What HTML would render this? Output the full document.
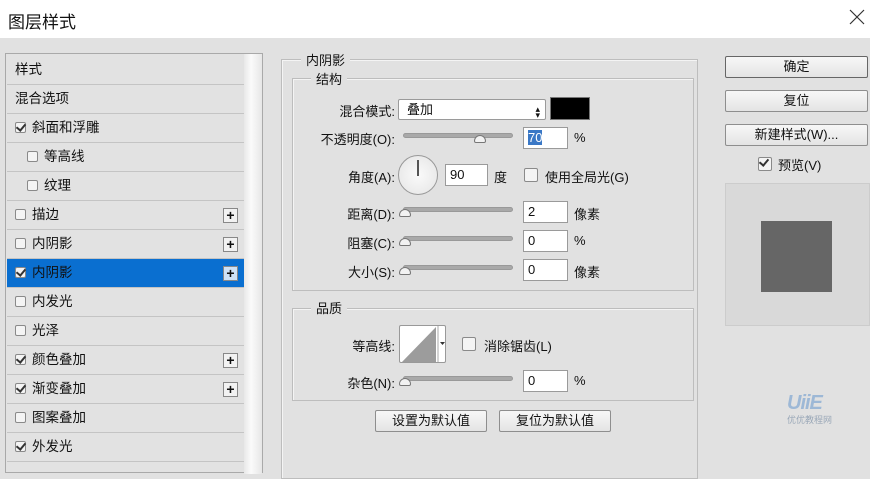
<!DOCTYPE html>
<html><head><meta charset="utf-8"><style>
*{margin:0;padding:0;box-sizing:border-box}
body{width:870px;height:464px;overflow:hidden;background:#e1e1e1;font-family:"Liberation Sans","Noto Sans CJK SC",sans-serif;font-size:13px;color:#111;position:relative}
.a{position:absolute}
.title{left:0;top:0;width:870px;height:38px;background:#fff}
.row{position:absolute;left:7px;width:237px;height:29px;border-bottom:1px solid #c4c4c4;background:#e2e2e2;line-height:28px;padding-left:8px;font-size:13.5px}
.row.sel{background:#0a6fd0;color:#111}
.cb{display:inline-block;width:11px;height:11px;border:1px solid #8a8a8a;background:#f4f4f4;vertical-align:-1px;margin-right:6px;border-radius:2px;position:relative}
.ck::after{content:"";position:absolute;left:2px;top:-1px;width:4px;height:7px;border-right:2px solid #333;border-bottom:2px solid #333;transform:rotate(40deg)}
.plus{position:absolute;right:6px;top:7px;width:15px;height:15px;border:1px solid #888;background:#f2f2f2;font-weight:bold;line-height:13px;text-align:center;font-size:14px}
.lbl{position:absolute;text-align:right;width:120px;font-size:13px}
.track{position:absolute;height:5px;background:#a9a9a9;border-radius:3px;border:1px solid #999}
.thumb{position:absolute;width:12px;height:8px;border:1px solid #777;background:#f2f2f2;border-radius:6px 6px 2px 2px}
.inp{position:absolute;width:45px;height:22px;background:#fff;border:1px solid #9a9a9a;padding-left:4px;line-height:20px}
.btn{position:absolute;height:22px;border:1px solid #8e8e8e;border-radius:2px;background:linear-gradient(#f7f7f7,#e4e4e4);text-align:center;line-height:20px;font-size:13px}
.frame{position:absolute;border:1px solid #bdbdbd;box-shadow:1px 1px 0 #f4f4f4 inset}
.leg{position:absolute;background:#e1e1e1;padding:0 5px;font-size:13px}
.box{position:absolute;width:14px;height:14px;border:1px solid #8a8a8a;background:#f4f4f4;border-radius:2px}
</style></head><body>
<div class="a title"></div>
<div class="a" style="left:8px;top:8px;font-size:17px">图层样式</div>
<svg class="a" style="left:849px;top:9px" width="16" height="16"><path d="M1 1L15 15M15 1L1 15" stroke="#333" stroke-width="1.2"/></svg>

<div class="a" style="left:5px;top:53px;width:258px;height:420px;border:1px solid #a9a9a9;background:#e2e2e2"></div>
<div class="a" style="left:244px;top:54px;width:18px;height:420px;background:linear-gradient(90deg,#e8e8e8,#fbfbfb 40%,#e6e6e6)"></div>
<div class="row" style="top:56px">样式</div>
<div class="row" style="top:85px">混合选项</div>
<div class="row" style="top:114px"><span class="cb ck"></span>斜面和浮雕</div>
<div class="row" style="top:143px;padding-left:20px"><span class="cb"></span>等高线</div>
<div class="row" style="top:172px;padding-left:20px"><span class="cb"></span>纹理</div>
<div class="row" style="top:201px"><span class="cb"></span>描边<span class="plus">+</span></div>
<div class="row" style="top:230px"><span class="cb"></span>内阴影<span class="plus">+</span></div>
<div class="row sel" style="top:259px"><span class="cb ck"></span>内阴影<span class="plus" style="background:#cfe2f6">+</span></div>
<div class="row" style="top:288px"><span class="cb"></span>内发光</div>
<div class="row" style="top:317px"><span class="cb"></span>光泽</div>
<div class="row" style="top:346px"><span class="cb ck"></span>颜色叠加<span class="plus">+</span></div>
<div class="row" style="top:375px"><span class="cb ck"></span>渐变叠加<span class="plus">+</span></div>
<div class="row" style="top:404px"><span class="cb"></span>图案叠加</div>
<div class="row" style="top:433px"><span class="cb ck"></span>外发光</div>

<div class="frame" style="left:281px;top:59px;width:417px;height:420px"></div>
<div class="leg" style="left:301px;top:50px">内阴影</div>
<div class="frame" style="left:292px;top:78px;width:402px;height:213px"></div>
<div class="leg" style="left:311px;top:69px">结构</div>

<div class="lbl" style="left:275px;top:101px">混合模式:</div>
<div class="a" style="left:398px;top:99px;width:148px;height:21px;background:#fff;border:1px solid #9a9a9a;border-radius:2px;padding-left:8px;line-height:19px">叠加<span style="position:absolute;right:5px;top:0;font-size:9px">▴</span><span style="position:absolute;right:5px;top:6px;font-size:9px">▾</span></div>
<div class="a" style="left:550px;top:97px;width:40px;height:23px;background:#000;border:1px solid #777"></div>

<div class="lbl" style="left:275px;top:129px">不透明度(O):</div>
<div class="track" style="left:403px;top:133px;width:110px"></div>
<div class="thumb" style="left:474px;top:135px"></div>
<div class="inp" style="left:523px;top:127px;"><span style="background:#3a78c6;color:#fff">70</span></div>
<div class="a" style="left:574px;top:130px">%</div>

<div class="lbl" style="left:275px;top:167px">角度(A):</div>
<div class="a" style="left:398px;top:155px;width:40px;height:40px;border:1px solid #999;border-radius:50%;background:radial-gradient(#fafafa,#e4e4e4)"></div>
<div class="a" style="left:417px;top:160px;width:2px;height:16px;background:#555"></div>
<div class="inp" style="left:445px;top:164px;width:43px">90</div>
<div class="a" style="left:494px;top:167px">度</div>
<div class="box" style="left:524px;top:168px"></div>
<div class="a" style="left:545px;top:167px">使用全局光(G)</div>

<div class="lbl" style="left:275px;top:204px">距离(D):</div>
<div class="track" style="left:403px;top:207px;width:110px"></div>
<div class="thumb" style="left:399px;top:209px"></div>
<div class="inp" style="left:523px;top:201px">2</div>
<div class="a" style="left:574px;top:204px">像素</div>

<div class="lbl" style="left:275px;top:233px">阻塞(C):</div>
<div class="track" style="left:403px;top:236px;width:110px"></div>
<div class="thumb" style="left:399px;top:238px"></div>
<div class="inp" style="left:523px;top:230px">0</div>
<div class="a" style="left:574px;top:233px">%</div>

<div class="lbl" style="left:275px;top:262px">大小(S):</div>
<div class="track" style="left:403px;top:265px;width:110px"></div>
<div class="thumb" style="left:399px;top:267px"></div>
<div class="inp" style="left:523px;top:259px">0</div>
<div class="a" style="left:574px;top:262px">像素</div>

<div class="frame" style="left:292px;top:308px;width:402px;height:93px"></div>
<div class="leg" style="left:311px;top:298px">品质</div>
<div class="lbl" style="left:275px;top:336px">等高线:</div>
<div class="a" style="left:399px;top:325px;width:47px;height:38px;border:1px solid #999;background:#fff;border-radius:2px;overflow:hidden">
<svg width="47" height="38" style="position:absolute;left:0;top:0"><polygon points="1,37 36,1 36,37" fill="#9c9c9c"/><line x1="38" y1="0" x2="38" y2="38" stroke="#aaa"/><polygon points="40,16 45,16 42.5,19" fill="#333"/></svg></div>
<div class="box" style="left:462px;top:337px"></div>
<div class="a" style="left:484px;top:336px">消除锯齿(L)</div>
<div class="lbl" style="left:275px;top:373px">杂色(N):</div>
<div class="track" style="left:403px;top:376px;width:110px"></div>
<div class="thumb" style="left:399px;top:378px"></div>
<div class="inp" style="left:523px;top:370px">0</div>
<div class="a" style="left:574px;top:373px">%</div>

<div class="btn" style="left:375px;top:410px;width:112px">设置为默认值</div>
<div class="btn" style="left:499px;top:410px;width:112px">复位为默认值</div>

<div class="btn" style="left:725px;top:56px;width:143px;border:1px solid #666">确定</div>
<div class="btn" style="left:725px;top:90px;width:143px">复位</div>
<div class="btn" style="left:725px;top:124px;width:143px">新建样式(W)...</div>
<div class="a" style="left:758px;top:155px"><span class="cb ck" style="width:14px;height:14px"></span>预览(V)</div>
<div class="a" style="left:725px;top:183px;width:145px;height:143px;background:#d9d9d9;border:1px solid #ccc"></div>
<div class="a" style="left:761px;top:221px;width:71px;height:71px;background:#666"></div>
<div class="a" style="left:787px;top:392px;font-size:20px;font-weight:bold;font-style:italic;color:#9db8d6;letter-spacing:-1px">UiiE</div>
<div class="a" style="left:787px;top:413px;font-size:9px;color:#9aa8b8">优优教程网</div>
</body></html>
